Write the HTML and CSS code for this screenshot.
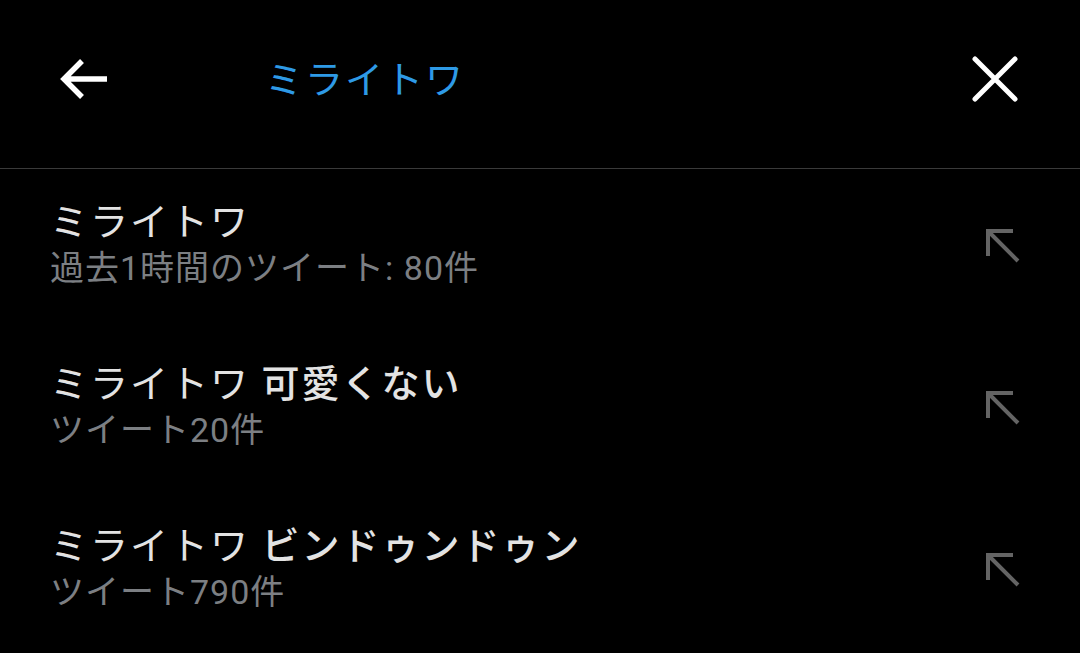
FILE: index.html
```html
<!DOCTYPE html>
<html lang="ja">
<head>
  <meta charset="UTF-8">
  <meta name="viewport" content="width=device-width, initial-scale=1.0">
  <title>検索</title>
  <link rel="stylesheet" href="styles.css">
</head>
<body>
  <header class="search-bar">
    <button class="icon-btn back-btn" aria-label="戻る">
      <svg width="48" height="48" viewBox="0 0 48 48">
        <path d="M47 24H4M22 6L4 24l18 18" fill="none" stroke="#fff" stroke-width="5.5"/>
      </svg>
    </button>
    <div class="search-query">ミライトワ</div>
    <button class="icon-btn close-btn" aria-label="クリア">
      <svg width="46" height="46" viewBox="0 0 46 46">
        <path d="M3 3l40 40M43 3L3 43" fill="none" stroke="#fff" stroke-width="5" stroke-linecap="round"/>
      </svg>
    </button>
  </header>

  <ul class="suggestions">
    <li class="suggestion">
      <div class="suggestion-text">
        <div class="suggestion-title">ミライトワ</div>
        <div class="suggestion-meta">過去1時間のツイート: 80件</div>
      </div>
      <span class="fill-icon">
        <svg width="40" height="40" viewBox="0 0 40 40">
          <path d="M6 31V6h25M6 6l30 30" fill="none" stroke="#646464" stroke-width="4"/>
        </svg>
      </span>
    </li>
    <li class="suggestion">
      <div class="suggestion-text">
        <div class="suggestion-title">ミライトワ <b>可愛くない</b></div>
        <div class="suggestion-meta">ツイート20件</div>
      </div>
      <span class="fill-icon">
        <svg width="40" height="40" viewBox="0 0 40 40">
          <path d="M6 31V6h25M6 6l30 30" fill="none" stroke="#646464" stroke-width="4"/>
        </svg>
      </span>
    </li>
    <li class="suggestion">
      <div class="suggestion-text">
        <div class="suggestion-title">ミライトワ <b>ビンドゥンドゥン</b></div>
        <div class="suggestion-meta">ツイート790件</div>
      </div>
      <span class="fill-icon">
        <svg width="40" height="40" viewBox="0 0 40 40">
          <path d="M6 31V6h25M6 6l30 30" fill="none" stroke="#646464" stroke-width="4"/>
        </svg>
      </span>
    </li>
  </ul>
</body>
</html>
```

FILE: styles.css
```css
body {
  margin: 0;
  background: #000;
  color: #e6e6e6;
  font-family: Roboto, "Noto Sans CJK JP", sans-serif;
  overflow: hidden;
}

.search-bar {
  display: flex;
  align-items: center;
  height: 168px;
  padding: 0 62px 0 60px;
  border-bottom: 1px solid #3a3a3a;
  box-sizing: content-box;
}
.icon-btn {
  display: flex;
  padding: 0;
  border: none;
  background: none;
  margin-top: -10px;
}
.search-query {
  flex: 1;
  margin-left: 157px;
  margin-top: -15px;
  font-size: 38px;
  letter-spacing: 2px;
  color: #2e9ae6;
}

.suggestions {
  list-style: none;
  margin: 0;
  padding: 0;
}
.suggestion {
  display: flex;
  align-items: center;
  height: 162px;
  padding: 0 58px 10px 50px;
  box-sizing: border-box;
}
.suggestion-text { flex: 1; }
.suggestion-title {
  font-size: 38px;
  line-height: 46px;
  letter-spacing: 2px;
  color: #e3e3e3;
}
.suggestion-title b { font-weight: 500; }
.suggestion-meta {
  font-size: 34px;
  line-height: 46px;
  letter-spacing: 1px;
  color: #7c7f83;
}
.fill-icon { display: flex; }
```
